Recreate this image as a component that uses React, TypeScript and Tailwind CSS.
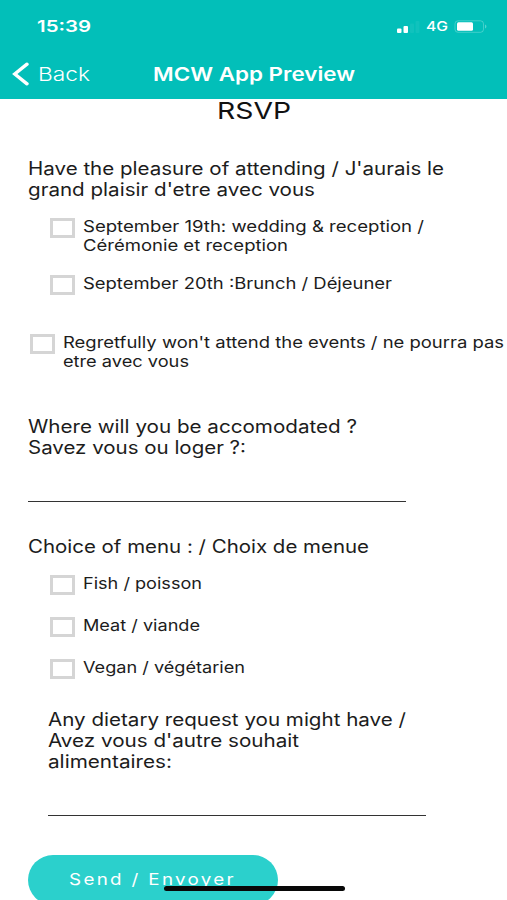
import { useLayoutEffect, useRef, useState } from "react";
import type { ReactNode } from "react";

function currentScale(el: HTMLElement) {
  return new DOMMatrixReadOnly(getComputedStyle(el).transform).a;
}

/* One line of wide text, stretched horizontally to fill its container. */
function Line({ className, children }: { className: string; children: ReactNode }) {
  const box = useRef<HTMLDivElement>(null);
  const text = useRef<HTMLSpanElement>(null);
  const [scale, setScale] = useState(1.22);

  useLayoutEffect(() => {
    const fit = () => {
      if (box.current && text.current && text.current.offsetWidth > 0) {
        setScale((box.current.clientWidth / text.current.getBoundingClientRect().width) * currentScale(text.current));
      }
    };
    fit();
    document.fonts?.ready.then(fit);
  }, []);

  return (
    <div ref={box} className={`shrink-0 ${className}`}>
      <span
        ref={text}
        className="inline-block origin-left whitespace-nowrap align-top"
        style={{ transform: `scaleX(${scale})` }}
      >
        {children}
      </span>
    </div>
  );
}

function Option({ className = "", children }: { className?: string; children: ReactNode }) {
  return (
    <label className={`flex items-start gap-[8px] text-[16px] leading-[19px] ${className}`}>
      <input
        type="checkbox"
        className="mt-px h-5 w-[25px] shrink-0 appearance-none border-[3px] border-[#d5d5d5] bg-white"
      />
      <span className="flex flex-col">{children}</span>
    </label>
  );
}

function StatusBar() {
  return (
    <div className="flex h-[54px] items-start justify-between pt-[16px] pr-[19px] pl-[37px]">
      <Line className="w-[54px] text-[16px] leading-[21px] font-semibold">15:39</Line>
      <div className="flex items-center">
        <svg width="24" height="14" viewBox="0 0 24 14" className="mr-[6px]" fill="white">
          <rect x="1" y="8.500" width="4.5" height="4.5" rx="1" />
          <rect x="7.500" y="6" width="4.5" height="7" rx="1" />
          <rect x="14" y="3.500" width="4" height="9.5" rx="1" opacity="0.06" />
          <rect x="19.500" y="1" width="4" height="12" rx="1" opacity="0.06" />
        </svg>
        <Line className="w-[22px] text-[13.5px] leading-[21px] font-medium">4G</Line>
        <svg width="34" height="14" viewBox="0 0 34 14" className="ml-[6px]">
          <rect x="1" y="0.8" width="28.5" height="11.5" rx="3" fill="none" stroke="white" strokeOpacity="0.25" />
          <rect x="3" y="2.3" width="16" height="8.5" rx="1.5" fill="white" />
          <path d="M31.2 4.500v4c1.6-.5 1.6-3.500 0-4z" fill="white" fillOpacity="0.4" />
        </svg>
      </div>
    </div>
  );
}

export default function App() {
  return (
    <div className="relative flex h-[900px] w-[507px] flex-col overflow-hidden bg-white font-['Inter','Liberation_Sans',sans-serif] text-[#1c1c1c]">
      <header className="h-[98.5px] shrink-0 bg-[#02bfb9] text-white">
        <StatusBar />
        <div className="flex pl-[12px]">
          <svg width="18" height="24" viewBox="0 0 18 24" className="mt-[8px] mr-[8px]" fill="none" stroke="white" strokeWidth="3.4">
            <path d="M15 2.200 2.800 12 15 21.800" strokeLinecap="round" strokeLinejoin="miter" />
          </svg>
          <Line className="mt-[9px] w-[52px] text-[18.5px] leading-[23px] font-light">Back</Line>
          <Line className="mt-[9px] ml-[63px] w-[202px] text-[18.5px] leading-[23px] font-semibold">MCW App Preview</Line>
        </div>
      </header>

      <main className="flex flex-col">
        <Line className="ml-[217px] w-[73.5px] text-[23.5px] leading-[23px] text-[#111]">RSVP</Line>

        <div className="mt-[36.500px] ml-[28px] text-[18px] leading-[21px]">
          <Line className="w-[416px]">Have the pleasure of attending / J'aurais le</Line>
          <Line className="w-[287px]">grand plaisir d'etre avec vous</Line>
        </div>

        <Option className="mt-[17px] ml-[50px]">
          <Line className="w-[341px]">September 19th: wedding &amp; reception /</Line>
          <Line className="w-[205px]">Cérémonie et reception</Line>
        </Option>
        <Option className="mt-[19px] ml-[50px]">
          <Line className="w-[309px]">September 20th :Brunch / Déjeuner</Line>
        </Option>
        <Option className="mt-[38px] ml-[30px]">
          <Line className="w-[441px]">Regretfully won't attend the events / ne pourra pas</Line>
          <Line className="w-[126px]">etre avec vous</Line>
        </Option>

        <div className="mt-[45px] ml-[28px] w-[378px] border-b border-[#333] pb-[43px] text-[18px] leading-[21px]">
          <Line className="w-[329px]">Where will you be accomodated ?</Line>
          <Line className="w-[218px]">Savez vous ou loger ?:</Line>
        </div>

        <div className="mt-[34px] ml-[28px] text-[18px] leading-[21px]">
          <Line className="w-[341px]">Choice of menu : / Choix de menue</Line>
        </div>
        <Option className="mt-[17px] ml-[50px]">
          <Line className="w-[119px]">Fish / poisson</Line>
        </Option>
        <Option className="mt-[21px] ml-[50px]">
          <Line className="w-[117px]">Meat / viande</Line>
        </Option>
        <Option className="mt-[21px] ml-[50px]">
          <Line className="w-[162px]">Vegan / végétarien</Line>
        </Option>

        <div className="mt-[30px] ml-[48px] w-[378px] border-b border-[#333] pb-[43px] text-[18px] leading-[21px]">
          <Line className="w-[358px]">Any dietary request you might have /</Line>
          <Line className="w-[251px]">Avez vous d'autre souhait</Line>
          <Line className="w-[124px]">alimentaires:</Line>
        </div>

        <button className="mt-[39px] ml-[28px] flex h-[50px] w-[250px] shrink-0 justify-start rounded-full bg-[#2bd0cc] pt-[14px] pl-[40.500px] text-left text-white">
          <Line className="w-[167px] text-[16px] leading-[21px] tracking-[2px]">Send / Envoyer</Line>
        </button>
      </main>

      <div className="absolute top-[885.5px] left-[163.5px] h-[5.5px] w-[181px] rounded-full bg-[#080808]" />
    </div>
  );
}
